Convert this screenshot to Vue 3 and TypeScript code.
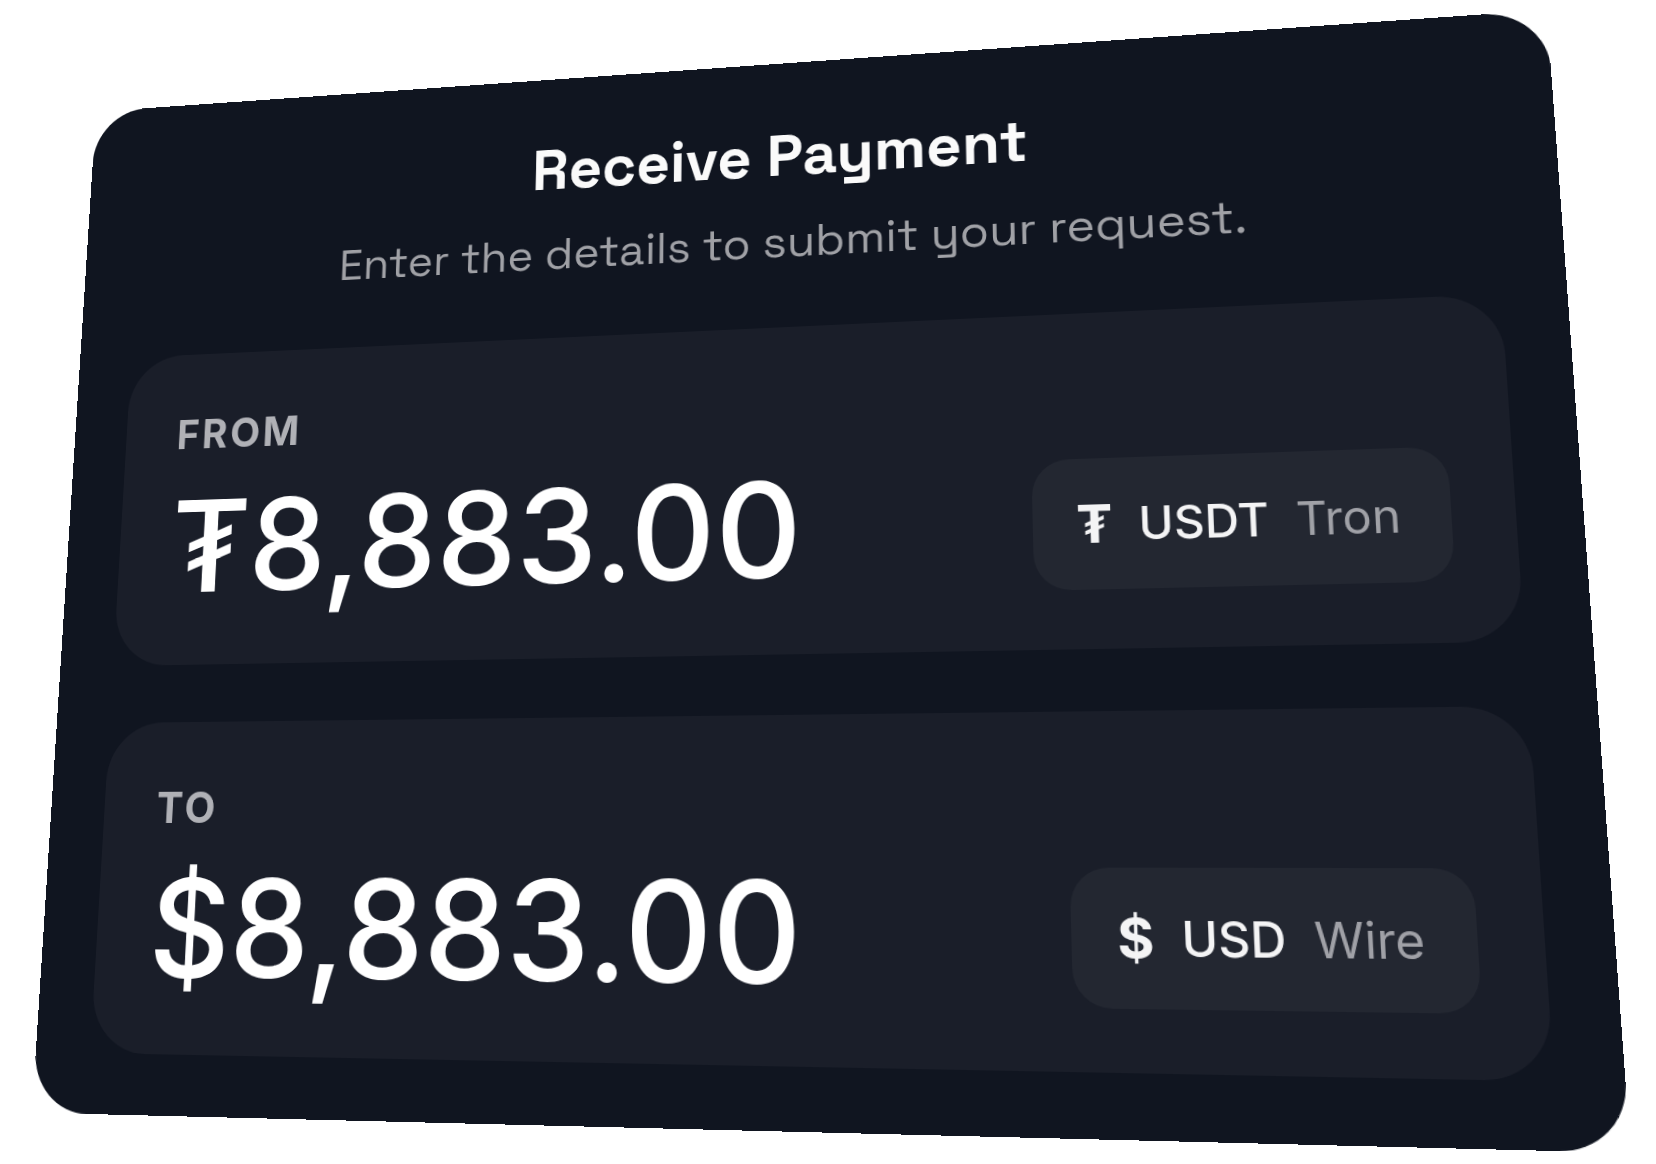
<script setup lang="ts">
interface Leg {
  id: string
  label: string
  symbol: string
  amount: string
  currency: string
  method: string
}

const legs: Leg[] = [
  { id: 'from', label: 'FROM', symbol: '₮', amount: '8,883.00', currency: 'USDT', method: 'Tron' },
  { id: 'to', label: 'TO', symbol: '$', amount: '8,883.00', currency: 'USD', method: 'Wire' },
]
</script>

<template>
  <main class="stage">
    <section class="card" aria-labelledby="payment-title">
      <header class="head">
        <h1 id="payment-title" class="title">Receive Payment</h1>
        <p class="subtitle">Enter the details to submit your request.</p>
      </header>

      <div v-for="leg in legs" :key="leg.id" class="panel">
        <div class="value">
          <label class="label" :for="leg.id">{{ leg.label }}</label>
          <output :id="leg.id" class="amount">{{ leg.symbol }}{{ leg.amount }}</output>
        </div>
        <button type="button" class="chip">
          <span class="symbol">{{ leg.symbol }}</span>
          <span class="currency">{{ leg.currency }}</span>
          <span class="method">{{ leg.method }}</span>
        </button>
      </div>
    </section>
  </main>
</template>

<style>
body {
  margin: 0;
  background: #ffffff;
}
</style>

<style scoped>
.stage {
  box-sizing: border-box;
  min-height: 100vh;
  padding: 33px 115px 48px 8px;
  font-family: Inter, 'Noto Sans', sans-serif;
}

/* The whole card is tilted in space: bottom and right edges come forward. */
.card {
  display: flex;
  flex-direction: column;
  gap: 60px;
  padding: 60px;
  border-radius: 60px;
  background: #101520;
  color: #ffffff;
  transform: perspective(1750px) rotateX(9deg) rotateY(-9deg);
}

.head {
  display: flex;
  flex-direction: column;
  gap: 22px;
  text-align: center;
}

.title {
  margin: 0;
  font-family: 'Space Grotesk', Inter, sans-serif;
  font-size: 63px;
  font-weight: 700;
  line-height: 82px;
  color: #fafafa;
}

.subtitle {
  margin: 0;
  font-family: 'Space Grotesk', Inter, sans-serif;
  font-size: 48px;
  font-weight: 400;
  line-height: 62px;
  color: #a0a1a6;
}

.panel {
  display: flex;
  align-items: flex-end;
  justify-content: space-between;
  padding: 58px;
  border-radius: 60px;
  background: #1a1e29;
}

.value {
  display: flex;
  flex-direction: column;
  gap: 24px;
}

.label {
  font-size: 44px;
  font-weight: 700;
  line-height: 60px;
  letter-spacing: 3px;
  color: #b0b1b6;
}

.amount {
  font-size: 136px;
  font-weight: 500;
  line-height: 136px;
}

.chip {
  display: flex;
  align-items: center;
  gap: 25px;
  height: 130px;
  padding: 0 46px 0 42px;
  border: 0;
  border-radius: 36px;
  background: #232731;
  color: #f4f4f5;
  font-family: inherit;
  font-size: 45px;
  font-weight: 500;
}

.symbol {
  font-size: 52px;
  font-weight: 700;
}

.method {
  font-weight: 400;
  color: #a0a1a7;
}
</style>
